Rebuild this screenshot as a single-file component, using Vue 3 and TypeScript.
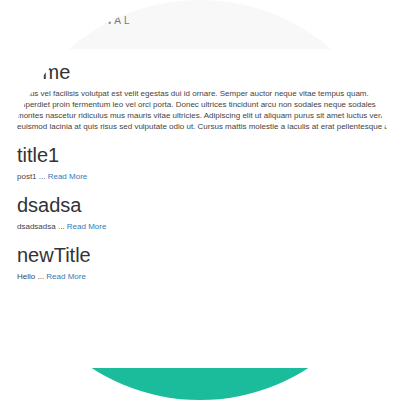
<script setup lang="ts">
interface Post {
  id: number
  title: string
  excerpt: string
}

const intro: string[] = [
  'Lacus vel facilisis volutpat est velit egestas dui id ornare. Semper auctor neque vitae tempus quam. Su',
  'imperdiet proin fermentum leo vel orci porta. Donec ultrices tincidunt arcu non sodales neque sodales ut',
  'montes nascetur ridiculus mus mauris vitae ultricies. Adipiscing elit ut aliquam purus sit amet luctus vene',
  'euismod lacinia at quis risus sed vulputate odio ut. Cursus mattis molestie a iaculis at erat pellentesque adi',
]

const posts: Post[] = [
  { id: 1, title: 'title1', excerpt: 'post1' },
  { id: 2, title: 'dsadsa', excerpt: 'dsadsadsa' },
  { id: 3, title: 'newTitle', excerpt: 'Hello' },
]
</script>

<template>
  <div class="page">
    <header class="bar">
      <span class="brand">NAL</span>
    </header>
    <main class="content">
      <section>
        <h1>Home</h1>
        <p>
          <span v-for="line in intro" :key="line" class="line">{{ line }}</span>
        </p>
      </section>
      <article v-for="post in posts" :key="post.id">
        <h1>{{ post.title }}</h1>
        <p>{{ post.excerpt }} ... <a :href="`#post-${post.id}`">Read More</a></p>
      </article>
    </main>
    <footer class="footer"></footer>
  </div>
</template>

<style>
body {
  margin: 0;
  background: #fff;
}
</style>

<style scoped>
.page {
  display: flex;
  flex-direction: column;
  min-height: 100vh;
  clip-path: circle(50%);
  background: #fff;
  color: #444;
  font-family: "Liberation Sans", Arial, sans-serif;
  font-size: 8px;
  line-height: 11px;
}

.bar {
  box-sizing: border-box;
  height: 49px;
  padding: 15px 104px;
  background: #f8f8f8;
}

.brand {
  color: #777;
  font-size: 10px;
  line-height: 12px;
  letter-spacing: 3px;
}

.content {
  flex: 1;
  padding: 12px 8px 12px 17px;
}

h1 {
  margin: 0 0 5px;
  color: #333;
  font-size: 20px;
  font-weight: 400;
  line-height: 22px;
}

p {
  margin: 0 0 12px;
}

.line {
  display: block;
  white-space: nowrap;
}

a {
  color: #337ab7;
  text-decoration: none;
}

.footer {
  height: 32px;
  background: #1abc9c;
}
</style>
